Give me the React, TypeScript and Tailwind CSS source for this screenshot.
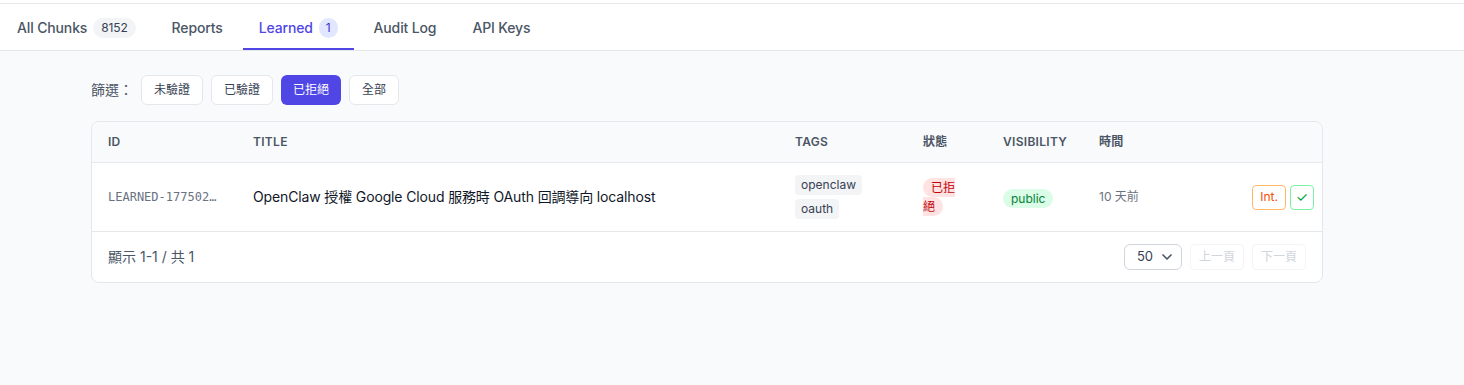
import { ChevronDown } from 'lucide-react';

const font = { fontFamily: 'Inter, "Noto Sans CJK TC", sans-serif' };

const tabs = [
  { label: 'All Chunks', badge: '8152' },
  { label: 'Reports' },
  { label: 'Learned', badge: '1', active: true },
  { label: 'Audit Log' },
  { label: 'API Keys' },
];

const filters = [
  { label: '未驗證' },
  { label: '已驗證' },
  { label: '已拒絕', active: true },
  { label: '全部' },
];

export default function App() {
  return (
    <div className="min-h-[385px] bg-[#f9fafb]" style={font}>
      <div className="h-[3px] bg-white" />

      {/* ─── tabs ─────────────────────────────── */}
      <nav className="flex gap-1 pl-px bg-white border-t border-b border-gray-200">
        {tabs.map((t) => (
          <button
            key={t.label}
            className={
              t.active
                ? 'flex items-center gap-1.5 px-4 pt-[14px] pb-[10px] text-sm font-medium tracking-[-0.01em] text-[#4f46e5] border-b-2 border-[#4f46e5]'
                : 'flex items-center gap-1.5 px-4 pt-[14px] pb-[10px] text-sm font-medium tracking-[-0.01em] text-gray-600 border-b-2 border-transparent'
            }
          >
            {t.label}
            {t.badge && (
              <span
                className={
                  t.active
                    ? 'rounded-full bg-indigo-100 px-[7px] py-0.5 text-xs font-normal text-indigo-700'
                    : 'rounded-full bg-gray-100 px-2 py-0.5 text-xs font-normal text-gray-700'
                }
              >
                {t.badge}
              </span>
            )}
          </button>
        ))}
      </nav>

      <div className="ml-[91px] w-[1232px] pt-[24px]">
        {/* ─── filter ─────────────────────────── */}
        <div className="flex items-center gap-2">
          <span className="text-sm text-gray-600">篩選：</span>
          {filters.map((f) => (
            <button
              key={f.label}
              className={
                f.active
                  ? 'rounded-md bg-[#4f46e5] px-3 py-[7px] text-xs text-white'
                  : 'rounded-md border border-gray-200 bg-white px-3 py-1.5 text-xs text-gray-700'
              }
            >
              {f.label}
            </button>
          ))}
        </div>

        {/* ─── table ──────────────────────────── */}
        <div className="mt-4 overflow-hidden rounded-lg border border-gray-200 bg-white">
          <table className="w-full table-fixed border-collapse">
            <colgroup>
              <col className="w-[145px]" />
              <col className="w-[542px]" />
              <col className="w-[128px]" />
              <col className="w-[80px]" />
              <col className="w-[96px]" />
              <col className="w-[120px]" />
              <col />
            </colgroup>
            <thead className="bg-[#f9fafb]">
              <tr className="text-left text-xs font-semibold tracking-wide text-gray-600">
                <th className="px-4 py-3 font-semibold">ID</th>
                <th className="px-4 py-3 font-semibold">TITLE</th>
                <th className="px-4 py-3 font-semibold">TAGS</th>
                <th className="px-4 py-3 font-semibold">狀態</th>
                <th className="px-4 py-3 font-semibold">VISIBILITY</th>
                <th className="px-4 py-3 font-semibold">時間</th>
                <th className="px-4 py-3" />
              </tr>
            </thead>
            <tbody>
              <tr className="border-t border-b border-gray-200">
                <td className="px-4 py-3">
                  <div className="truncate text-xs text-gray-500 font-['DejaVu_Sans_Mono',monospace]">
                    LEARNED-1775020000000
                  </div>
                </td>
                <td className="px-4 py-3 text-sm tracking-[-0.01em] text-gray-900">
                  OpenClaw 授權 Google Cloud 服務時 OAuth 回調導向 localhost
                </td>
                <td className="px-4 py-3">
                  <div className="flex flex-col items-start gap-1">
                    <span className="rounded bg-gray-100 px-1.5 py-0.5 text-xs text-gray-700">openclaw</span>
                    <span className="rounded bg-gray-100 px-1.5 py-0.5 text-xs text-gray-700">oauth</span>
                  </div>
                </td>
                <td className="px-4 py-3 text-xs leading-[19px]">
                  <span className="rounded-full bg-red-100 px-2 py-0.5 text-red-700">已拒絕</span>
                </td>
                <td className="px-4 py-3">
                  <span className="rounded-full bg-green-100 px-2 py-0.5 text-xs text-green-700">public</span>
                </td>
                <td className="px-4 py-3 text-xs text-gray-500">10 天前</td>
                <td className="py-3 pr-2">
                  <div className="flex justify-end gap-1">
                    <button className="h-[25px] rounded border border-orange-300 bg-white px-[7px] text-xs text-orange-600">
                      Int.
                    </button>
                    <button className="h-[25px] w-[24px] rounded border border-green-300 bg-white text-sm text-green-600">
                      ✓
                    </button>
                  </div>
                </td>
              </tr>
            </tbody>
          </table>

          {/* ─── footer ─────────────────────────── */}
          <div className="flex items-center justify-between px-4 py-3">
            <span className="text-sm text-gray-600">顯示 1-1 / 共 1</span>
            <div className="flex items-center gap-2">
              <div className="flex h-[26px] w-[58px] items-center justify-between rounded-md border border-gray-300 bg-white pl-3 pr-1.5 text-[13px] text-gray-700">
                50
                <ChevronDown className="h-4 w-4 text-gray-600" strokeWidth={2.5} />
              </div>
              <button className="h-[26px] rounded border border-gray-100 px-2 text-xs text-gray-300">上一頁</button>
              <button className="h-[26px] rounded border border-gray-100 px-2 text-xs text-gray-300">下一頁</button>
            </div>
          </div>
        </div>
      </div>
    </div>
  );
}
